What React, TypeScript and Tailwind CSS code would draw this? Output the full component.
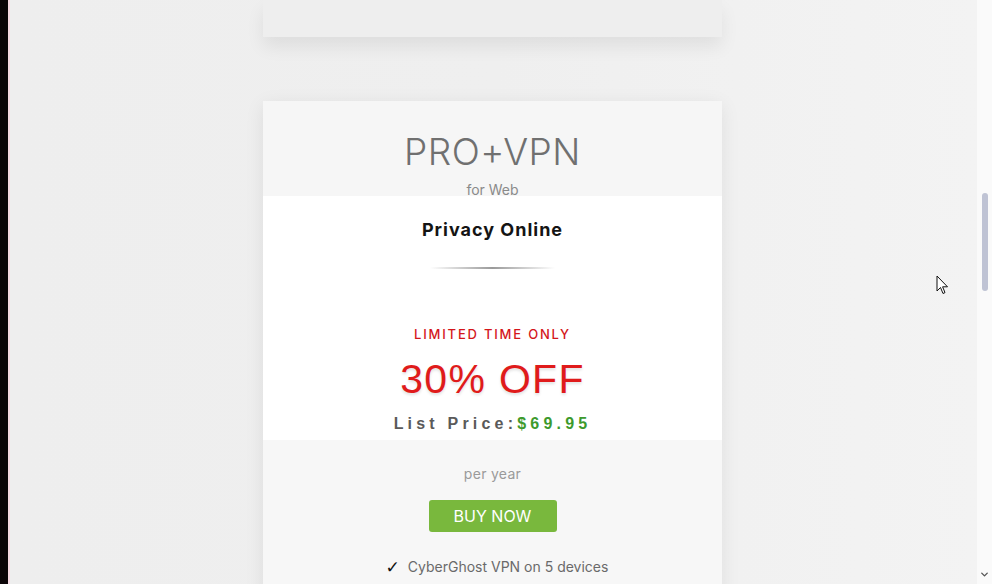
import { ChevronDown } from 'lucide-react';

export default function App() {
  const features = ['CyberGhost VPN on 5 devices', 'Protection for unlimited traffic'];

  return (
    <div className="h-[584px] w-[992px] overflow-hidden flex bg-[#f0f0f0] font-['Inter',sans-serif] relative">
      {/* left window edge */}
      <div className="w-[8px] bg-[#0b0507]"></div>
      <div className="w-[2px] bg-[#f6dbe3]"></div>

      <main className="flex-1 pl-[253px] bg-gradient-to-r from-[#eeeeee] via-[#efefef] to-[#f3f3f3]">
        {/* previous plan card, cut off at top */}
        <div className="w-[459px] h-[37px] bg-[#eeeeee] shadow-[0_10px_18px_rgba(0,0,0,0.07)]"></div>

        {/* PRO+VPN card */}
        <div className="mt-[64px] w-[459px] bg-white shadow-[0_4px_18px_rgba(0,0,0,0.08)] text-center">
          <div className="bg-[#f6f6f6] pt-[29px] h-[95px]">
            <h2 className="text-[37px] leading-[44px] font-light text-[#707070] tracking-[0.5px]">PRO+VPN</h2>
            <p className="mt-[6px] text-[14px] leading-[20px] text-[#8a8a8a]">for Web</p>
          </div>

          <div className="bg-white pt-[22px] pb-[4px]">
            <h3 className="text-[18px] leading-[24px] font-bold text-[#141414] tracking-[1px]">Privacy Online</h3>
            <div className="mx-auto mt-[25px] h-[2px] w-[125px] bg-gradient-to-r from-transparent via-[#9a9a9a] to-transparent"></div>
            <p className="mt-[56px] text-[13px] leading-[18px] text-[#d4161b] tracking-[1.8px] font-medium">LIMITED TIME ONLY</p>
            <p className="mt-[12px] text-[41px] leading-[48px] text-[#e01b1b] tracking-[1.3px] font-['Liberation_Sans',sans-serif] [text-shadow:0_2px_3px_rgba(0,0,0,0.12)]">30% OFF</p>
            <p className="mt-[9px] text-[16px] leading-[24px] font-bold tracking-[4.2px] text-[#5a5a5a] font-['Liberation_Sans',sans-serif]">
              List Price:<span className="text-[#3d9a2d]">$69.95</span>
            </p>
          </div>

          <div className="bg-[#f7f7f7] pt-[24px] pb-[30px]">
            <p className="text-[14px] leading-[20px] text-[#9a9a9a] tracking-[0.3px]">per year</p>
            <button className="mt-[16px] h-[32px] w-[128px] rounded-[3px] bg-[#79b83d] text-white text-[16px] leading-[32px]">BUY NOW</button>
            <ul className="mt-[25px] pl-[9px] flex flex-col items-center gap-[8px]">
              {features.map((f) => (
                <li key={f} className="flex items-center gap-[8px] text-[14px] leading-[20px] text-[#6a6a6a]">
                  <span className="text-[#111] text-[17px] font-bold font-['DejaVu_Sans',sans-serif]">✓</span>
                  <span>{f}</span>
                </li>
              ))}
            </ul>
          </div>
        </div>
      </main>

      {/* scrollbar */}
      <div className="w-[15px] bg-[#fafafa] flex flex-col items-center">
        <div className="mt-[193px] h-[98px] w-[6px] rounded-full bg-[#bfc3d4]"></div>
        <div className="flex-1"></div>
        <ChevronDown className="h-[11px] w-[11px] mb-[4px] text-[#555]" strokeWidth={3} />
      </div>

      {/* mouse cursor */}
      <svg className="absolute left-[936px] top-[275px]" width="13" height="20" viewBox="0 0 13 20">
        <path d="M1 1 L1 16 L4.5 12.5 L7 18.5 L9 17.6 L6.6 11.8 L11.5 11.8 Z" fill="white" stroke="#111" strokeWidth="1" strokeLinejoin="round" />
      </svg>
    </div>
  );
}
